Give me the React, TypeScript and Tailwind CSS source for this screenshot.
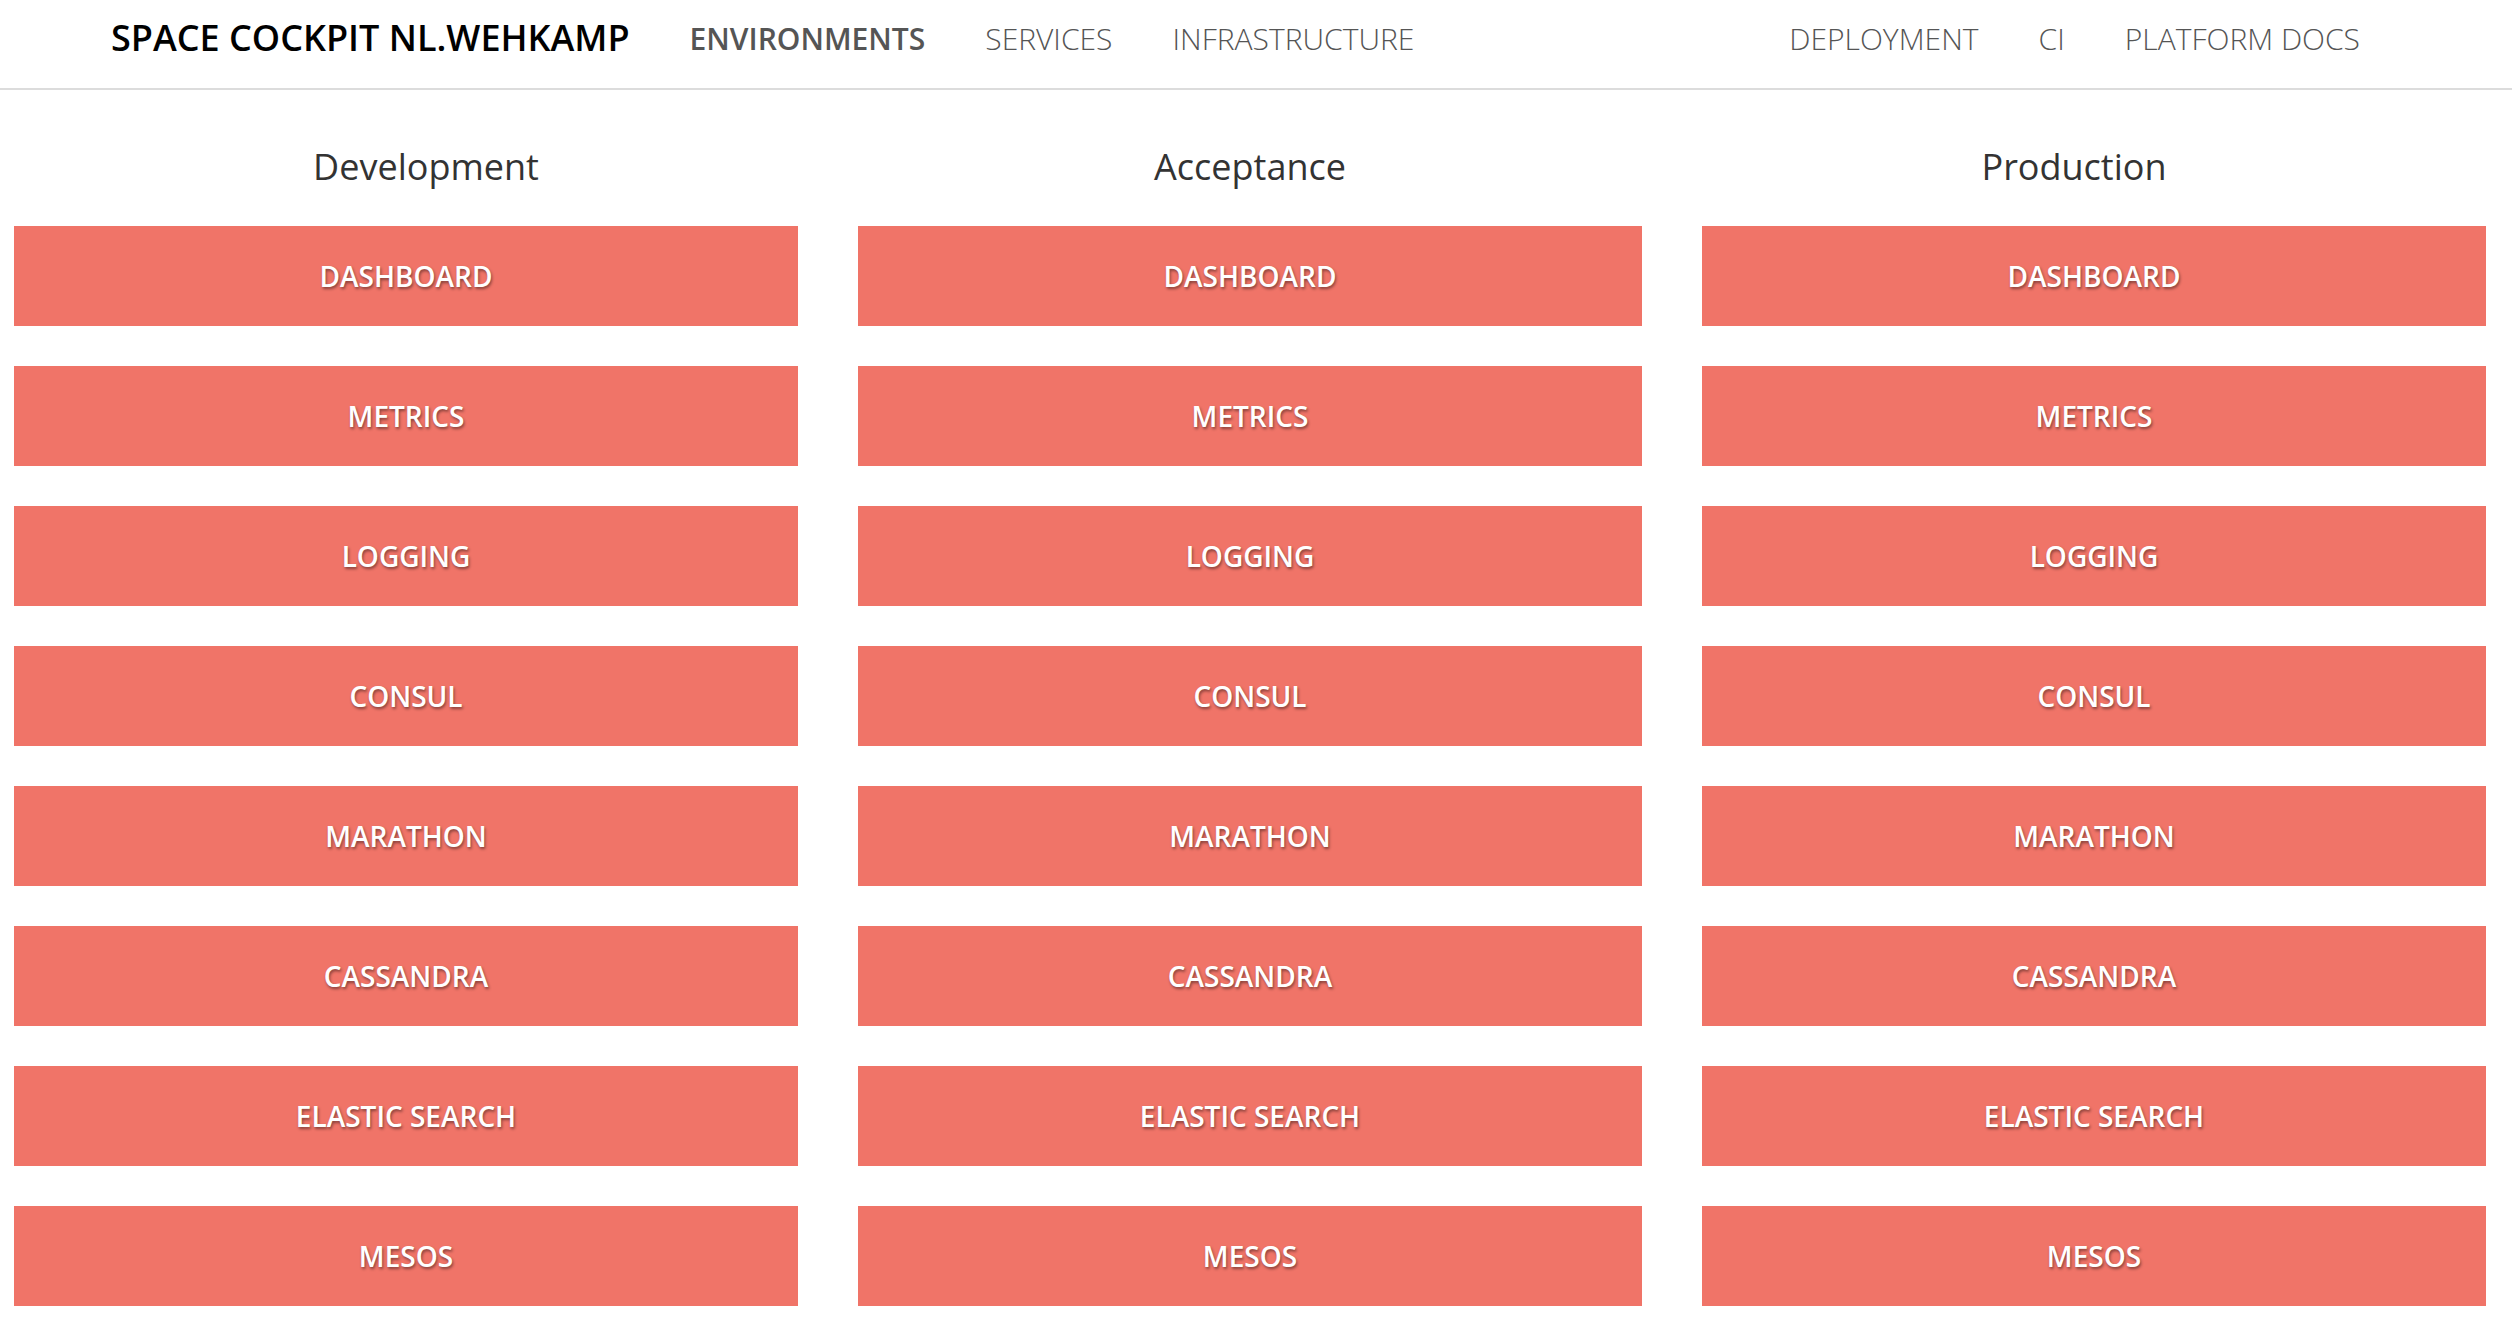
import React from "react";

const envs = ["Development", "Acceptance", "Production"];
const tools = [
  "DASHBOARD",
  "METRICS",
  "LOGGING",
  "CONSUL",
  "MARATHON",
  "CASSANDRA",
  "ELASTIC SEARCH",
  "MESOS",
];

export default function App() {
  return (
    <div className="min-h-screen bg-white font-['Open_Sans',sans-serif]">
      <header className="flex h-[90px] items-start border-b-2 border-[#dcdcdc] pl-[111px] pr-[122px]">
        <div className="pt-[13px] text-[36px] leading-[49px] font-semibold text-black whitespace-nowrap mr-[30px]">
          SPACE COCKPIT NL.WEHKAMP
        </div>
        <nav className="flex">
          <a className="px-[30px] pt-[18px] text-[30px] leading-[41px] font-semibold text-[#555]">ENVIRONMENTS</a>
          <a className="px-[30px] pt-[18px] text-[30px] leading-[41px] font-light text-[#555]">SERVICES</a>
          <a className="px-[30px] pt-[18px] text-[30px] leading-[41px] font-light text-[#555]">INFRASTRUCTURE</a>
        </nav>
        <nav className="ml-auto flex">
          <a className="px-[30px] pt-[18px] text-[30px] leading-[41px] font-light text-[#555]">DEPLOYMENT</a>
          <a className="px-[30px] pt-[18px] text-[30px] leading-[41px] font-light text-[#555]">CI</a>
          <a className="px-[30px] pt-[18px] text-[30px] leading-[41px] font-light text-[#555]">PLATFORM DOCS</a>
        </nav>
      </header>
      <main className="pl-[14px] pr-[26px] pt-[52px] pb-[40px]">
        <div className="grid grid-cols-3">
          {envs.map((e) => (
            <h2 key={e} className="text-center text-[36px] leading-[50px] font-normal text-[#333]">
              {e}
            </h2>
          ))}
        </div>
        <div className="mt-[34px] grid grid-cols-3 gap-x-[60px]">
          {envs.map((e) => (
            <div key={e} className="flex flex-col gap-[40px]">
              {tools.map((t) => (
                <a
                  key={t}
                  className="flex h-[100px] items-center justify-center bg-[#f07468] text-[28px] font-semibold text-white [text-shadow:1px_2px_3px_rgba(0,0,0,0.45)]"
                >
                  {t}
                </a>
              ))}
            </div>
          ))}
        </div>
      </main>
    </div>
  );
}
